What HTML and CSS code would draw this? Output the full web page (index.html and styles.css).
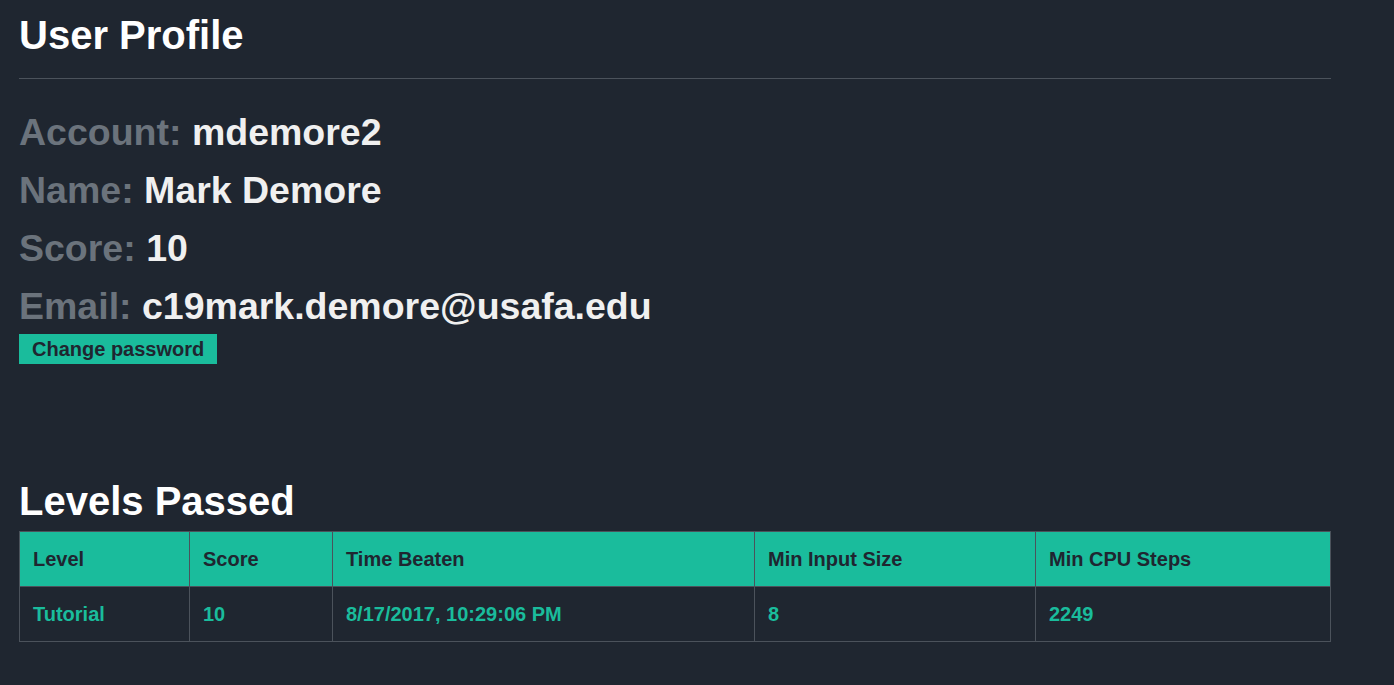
FILE: index.html
```html
<!DOCTYPE html>
<html>
<head>
<meta charset="utf-8">
<link rel="stylesheet" href="styles.css">
</head>
<body>
<div class="page">
  <h1 class="title">User Profile</h1>
  <hr class="rule">
  <div class="info">
    <div class="info-line"><span class="label">Account:</span> <span class="value">mdemore2</span></div>
    <div class="info-line"><span class="label">Name:</span> <span class="value">Mark Demore</span></div>
    <div class="info-line"><span class="label">Score:</span> <span class="value">10</span></div>
    <div class="info-line"><span class="label">Email:</span> <span class="value">c19mark.demore@usafa.edu</span></div>
  </div>
  <button class="btn">Change password</button>
  <h2 class="section-title">Levels Passed</h2>
  <table class="levels">
    <colgroup>
      <col class="c-level">
      <col class="c-score">
      <col class="c-time">
      <col class="c-input">
      <col class="c-cpu">
    </colgroup>
    <thead>
      <tr>
        <th>Level</th>
        <th>Score</th>
        <th>Time Beaten</th>
        <th>Min Input Size</th>
        <th>Min CPU Steps</th>
      </tr>
    </thead>
    <tbody>
      <tr>
        <td>Tutorial</td>
        <td>10</td>
        <td>8/17/2017, 10:29:06 PM</td>
        <td>8</td>
        <td>2249</td>
      </tr>
    </tbody>
  </table>
</div>
</body>
</html>
```

FILE: styles.css
```css
html, body {
  margin: 0;
  padding: 0;
  background: #1f2630;
  font-family: "Liberation Sans", Arial, sans-serif;
  color: #f0f0f0;
}

.page {
  width: 1312px;
  padding: 11px 0 0 19px;
}

.title {
  margin: 0;
  font-size: 40px;
  line-height: 48px;
  font-weight: bold;
  color: #ffffff;
}

.rule {
  margin: 19px 0 0 0;
  border: 0;
  border-top: 1px solid #4b525b;
  height: 0;
}

.info {
  display: flex;
  flex-direction: column;
  gap: 14px;
  margin-top: 31px;
}

.info-line {
  font-size: 37.5px;
  line-height: 44px;
  font-weight: bold;
}

.label {
  color: #6b737c;
}

.value {
  color: #f0f0f0;
}

.btn {
  display: block;
  margin: 6px 0 0 0;
  border: 0;
  border-radius: 0;
  background: #1abc9c;
  color: #1f2630;
  font-family: "Liberation Sans", Arial, sans-serif;
  font-size: 20px;
  line-height: 23px;
  font-weight: bold;
  padding: 4px 13px 3px 13px;
}

.section-title {
  margin: 113px 0 6px 0;
  font-size: 40px;
  line-height: 48px;
  font-weight: bold;
  color: #ffffff;
}

.levels {
  width: 1311px;
  table-layout: fixed;
  border-collapse: collapse;
  font-size: 20px;
  line-height: 23px;
  font-weight: bold;
}

.c-level { width: 170px; }
.c-score { width: 143px; }
.c-time { width: 422px; }
.c-input { width: 281px; }
.c-cpu { width: 295px; }

.levels th,
.levels td {
  border: 1px solid #4b525b;
  padding: 16px 13px 15px 13px;
  text-align: left;
}

.levels th {
  background: #1abc9c;
  color: #1f2630;
}

.levels td {
  color: #1abc9c;
}
```
